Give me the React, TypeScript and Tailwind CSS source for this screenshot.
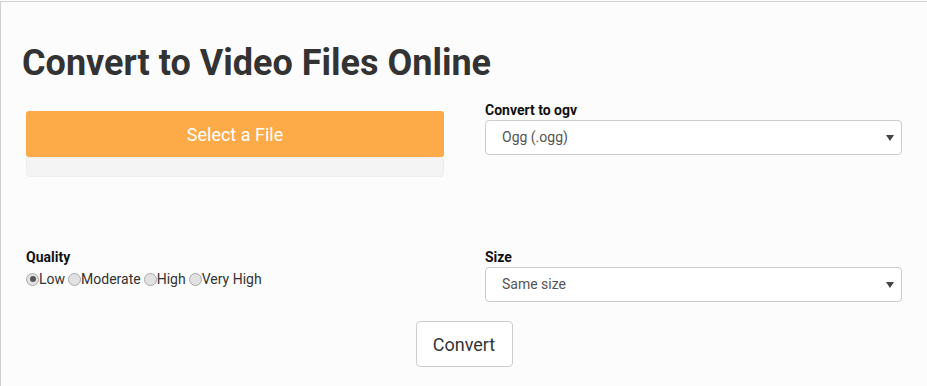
const Radio = ({ label, checked }: { label: string; checked?: boolean }) => (
  <label className="flex items-center">
    <span className="w-[13px] h-[13px] rounded-full border border-[#a9a9a9] bg-[#e2e2e2] flex items-center justify-center">
      {checked && <span className="w-[6px] h-[6px] rounded-full bg-[#555]" />}
    </span>
    <span>{label}</span>
  </label>
);

const FakeSelect = ({ value }: { value: string }) => (
  <div className="h-[35px] bg-white border border-[#ccc] rounded-[4px] flex items-center justify-between pl-[16px] pr-[7px] text-[14px] text-[#555]">
    <span>{value}</span>
    <svg width="8" height="6" viewBox="0 0 8 6">
      <path d="M0 0 H8 L4 6 Z" fill="#444" />
    </svg>
  </div>
);

export default function App() {
  return (
    <div className="w-[927px] h-[386px] bg-white pt-px overflow-hidden font-['Roboto',sans-serif]">
      <div className="h-full bg-[#fcfcfc] border-t border-l border-[#cfcfcf]">
        <h1 className="pl-[21px] pt-[37px] text-[36px] font-bold leading-[48px] text-[#333]">
          Convert to Video Files Online
        </h1>

        <div className="grid grid-cols-[418px_417px] gap-x-[41px] pl-[25px] mt-[13px]">
          <div className="pt-[11px]">
            <button className="w-full h-[46px] bg-[#fdaa48] rounded-[3px] text-white text-[18px]">
              Select a File
            </button>
            <div className="h-[20px] bg-[#f4f4f4] border border-[#eee] rounded-b-[4px]" />
          </div>
          <div>
            <div className="text-[14px] font-bold text-[#111] leading-[20px]">Convert to ogv</div>
            <FakeSelect value="Ogg (.ogg)" />
          </div>
        </div>

        <div className="grid grid-cols-[418px_417px] gap-x-[41px] pl-[25px] mt-[70px]">
          <div>
            <div className="text-[14px] font-bold text-[#111] leading-[20px]">Quality</div>
            <div className="flex mt-[3px] text-[14px] text-[#333] leading-[18px] gap-x-[3px]">
              <Radio label="Low" checked />
              <Radio label="Moderate" />
              <Radio label="High" />
              <Radio label="Very High" />
            </div>
          </div>
          <div>
            <div className="text-[14px] font-bold text-[#111] leading-[20px]">Size</div>
            <FakeSelect value="Same size" />
          </div>
        </div>

        <div className="flex justify-center mt-[19px]">
          <button className="w-[97px] h-[46px] bg-white border border-[#ccc] rounded-[4px] text-[18px] text-[#333]">
            Convert
          </button>
        </div>
      </div>
    </div>
  );
}
